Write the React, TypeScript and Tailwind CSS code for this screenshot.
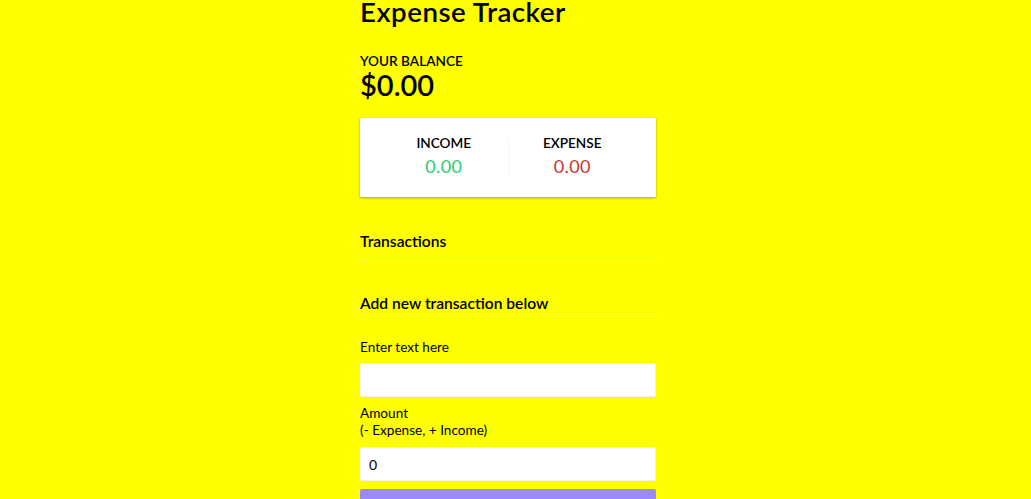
export default function App() {
  return (
    <div
      className="min-h-[499px] w-full bg-[#ffff00] flex justify-center pr-[15px] text-black"
      style={{ fontFamily: "Lato, 'Open Sans', sans-serif" }}
    >
      <div className="w-[296px] flex flex-col">
        <h2 className="text-[27.7px] font-semibold leading-[28px] tracking-[0.5px] mt-[-2px]">
          Expense Tracker
        </h2>

        <h4 className="mt-[27px] text-[13.6px] font-semibold uppercase leading-[16px]">Your Balance</h4>
        <h1 className="text-[29px] font-semibold leading-[32px]">$0.00</h1>

        <div className="mt-[17px] bg-white shadow-[0_1px_3px_rgba(0,0,0,0.12),0_1px_2px_rgba(0,0,0,0.24)] p-5 flex h-[79px]">
          <div className="flex-1 text-center border-r border-[#f4f4f4]">
            <h4 className="text-[13.6px] font-semibold uppercase leading-[16px] mt-[-3px]">Income</h4>
            <p className="text-[18px] tracking-[0.3px] text-[#2ecc71] leading-[22px] mt-[4px]">0.00</p>
          </div>
          <div className="flex-1 text-center">
            <h4 className="text-[13.6px] font-semibold uppercase leading-[16px] mt-[-3px]">Expense</h4>
            <p className="text-[18px] tracking-[0.3px] text-[#c0392b] leading-[22px] mt-[4px]">0.00</p>
          </div>
        </div>

        <h3 className="mt-[34px] text-[15.6px] font-semibold leading-[20px] pb-[6px]">Transactions</h3>
        <div className="h-px w-full bg-[#e8e8bc]" />

        <h3 className="mt-[35px] text-[15.6px] font-semibold leading-[20px] pb-[6px]">
          Add new transaction below
        </h3>
        <div className="h-px w-full bg-[#e8e8bc]" />

        <form className="flex flex-col">
          <label className="mt-[18px] text-[13.6px] leading-[18px]">Enter text here</label>
          <input
            type="text"
            className="mt-[7px] h-[34px] w-full bg-white border border-[#f2f2f2] rounded-[2px] px-[10px] text-[16px] outline-none"
          />
          <label className="mt-[8px] text-[13.6px] leading-[17px]">
            Amount
            <br />
            (- Expense, + Income)
          </label>
          <input
            type="number"
            defaultValue={0}
            className="mt-[8px] h-[34px] w-full bg-white border border-[#f2f2f2] rounded-[2px] px-[8px] text-[14px] outline-none"
          />
          <button
            type="button"
            className="mt-[8px] h-[38px] w-full bg-[#9c88ff] text-white text-[16px] rounded-[2px]"
          >
            Add transaction
          </button>
        </form>
      </div>
    </div>
  );
}
